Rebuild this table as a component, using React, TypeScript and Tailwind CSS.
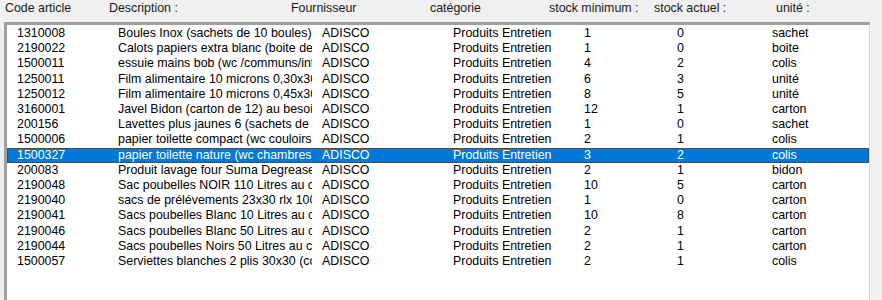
const rows: [string, string, string, string, string, string, string][] = [
  ["1310008", "Boules Inox (sachets de 10 boules)", "ADISCO", "Produits Entretien", "1", "0", "sachet"],
  ["2190022", "Calots papiers extra blanc (boite de 100)", "ADISCO", "Produits Entretien", "1", "0", "boite"],
  ["1500011", "essuie mains bob (wc /communs/infirmerie)", "ADISCO", "Produits Entretien", "4", "2", "colis"],
  ["1250011", "Film alimentaire 10 microns 0,30x300", "ADISCO", "Produits Entretien", "6", "3", "unité"],
  ["1250012", "Film alimentaire 10 microns 0,45x300", "ADISCO", "Produits Entretien", "8", "5", "unité"],
  ["3160001", "Javel Bidon (carton de 12) au besoin", "ADISCO", "Produits Entretien", "12", "1", "carton"],
  ["200156", "Lavettes plus jaunes 6 (sachets de 10)", "ADISCO", "Produits Entretien", "1", "0", "sachet"],
  ["1500006", "papier toilette compact (wc couloirs)", "ADISCO", "Produits Entretien", "2", "1", "colis"],
  ["1500327", "papier toilette nature (wc chambres)", "ADISCO", "Produits Entretien", "3", "2", "colis"],
  ["200083", "Produit lavage four Suma Degreaser", "ADISCO", "Produits Entretien", "2", "1", "bidon"],
  ["2190048", "Sac poubelles NOIR 110 Litres au carton", "ADISCO", "Produits Entretien", "10", "5", "carton"],
  ["2190040", "sacs de prélévements 23x30 rlx 100", "ADISCO", "Produits Entretien", "1", "0", "carton"],
  ["2190041", "Sacs poubelles Blanc 10 Litres au carton", "ADISCO", "Produits Entretien", "10", "8", "carton"],
  ["2190046", "Sacs poubelles Blanc 50 Litres au carton", "ADISCO", "Produits Entretien", "2", "1", "carton"],
  ["2190044", "Sacs poubelles Noirs 50 Litres au carton", "ADISCO", "Produits Entretien", "2", "1", "carton"],
  ["1500057", "Serviettes blanches 2 plis 30x30 (colis)", "ADISCO", "Produits Entretien", "2", "1", "colis"],
];

const SELECTED = 8;

export default function App() {
  return (
    <div className="w-[882px] h-[300px] overflow-hidden bg-[#f0f0f0] text-[12.4px] leading-[15px] font-['Tahoma','Liberation_Sans',sans-serif]">
      {/* column headers */}
      <div className="flex h-[22px] pt-[1px] text-[#1a1a1a] whitespace-nowrap">
        <div className="w-[109px] pl-[5px]">Code article</div>
        <div className="w-[182px]">Description :</div>
        <div className="w-[139px]">Fournisseur</div>
        <div className="w-[119px]">catégorie</div>
        <div className="w-[105px]">stock minimum :</div>
        <div className="w-[122px]">stock actuel :</div>
        <div>unité :</div>
      </div>

      {/* list box */}
      <div className="ml-[4px] w-[866px] h-[300px] bg-white border-t-[3px] border-l-[3px] border-r border-[#a0a0a0] border-r-[#d8d8d8] pt-[1px]">
        {rows.map((r, i) => {
          const sel = i === SELECTED;
          return (
            <div
              key={r[0]}
              className={
                "flex h-[15.2px] items-center whitespace-nowrap " +
                (sel ? "bg-[#0078d7] text-white outline-1 outline-dotted outline-[#3a3a3a] -outline-offset-1" : "text-black")
              }
            >
              <div className="w-[111px] pl-[10px] overflow-hidden">{r[0]}</div>
              <div className="w-[194px] mr-[10px] overflow-hidden">{r[1]}</div>
              <div className="w-[131px] overflow-hidden">{r[2]}</div>
              <div className="w-[131px] overflow-hidden">{r[3]}</div>
              <div className="w-[93px] overflow-hidden">{r[4]}</div>
              <div className="w-[95px] overflow-hidden">{r[5]}</div>
              <div className="flex-1 overflow-hidden">{r[6]}</div>
            </div>
          );
        })}
      </div>
    </div>
  );
}
